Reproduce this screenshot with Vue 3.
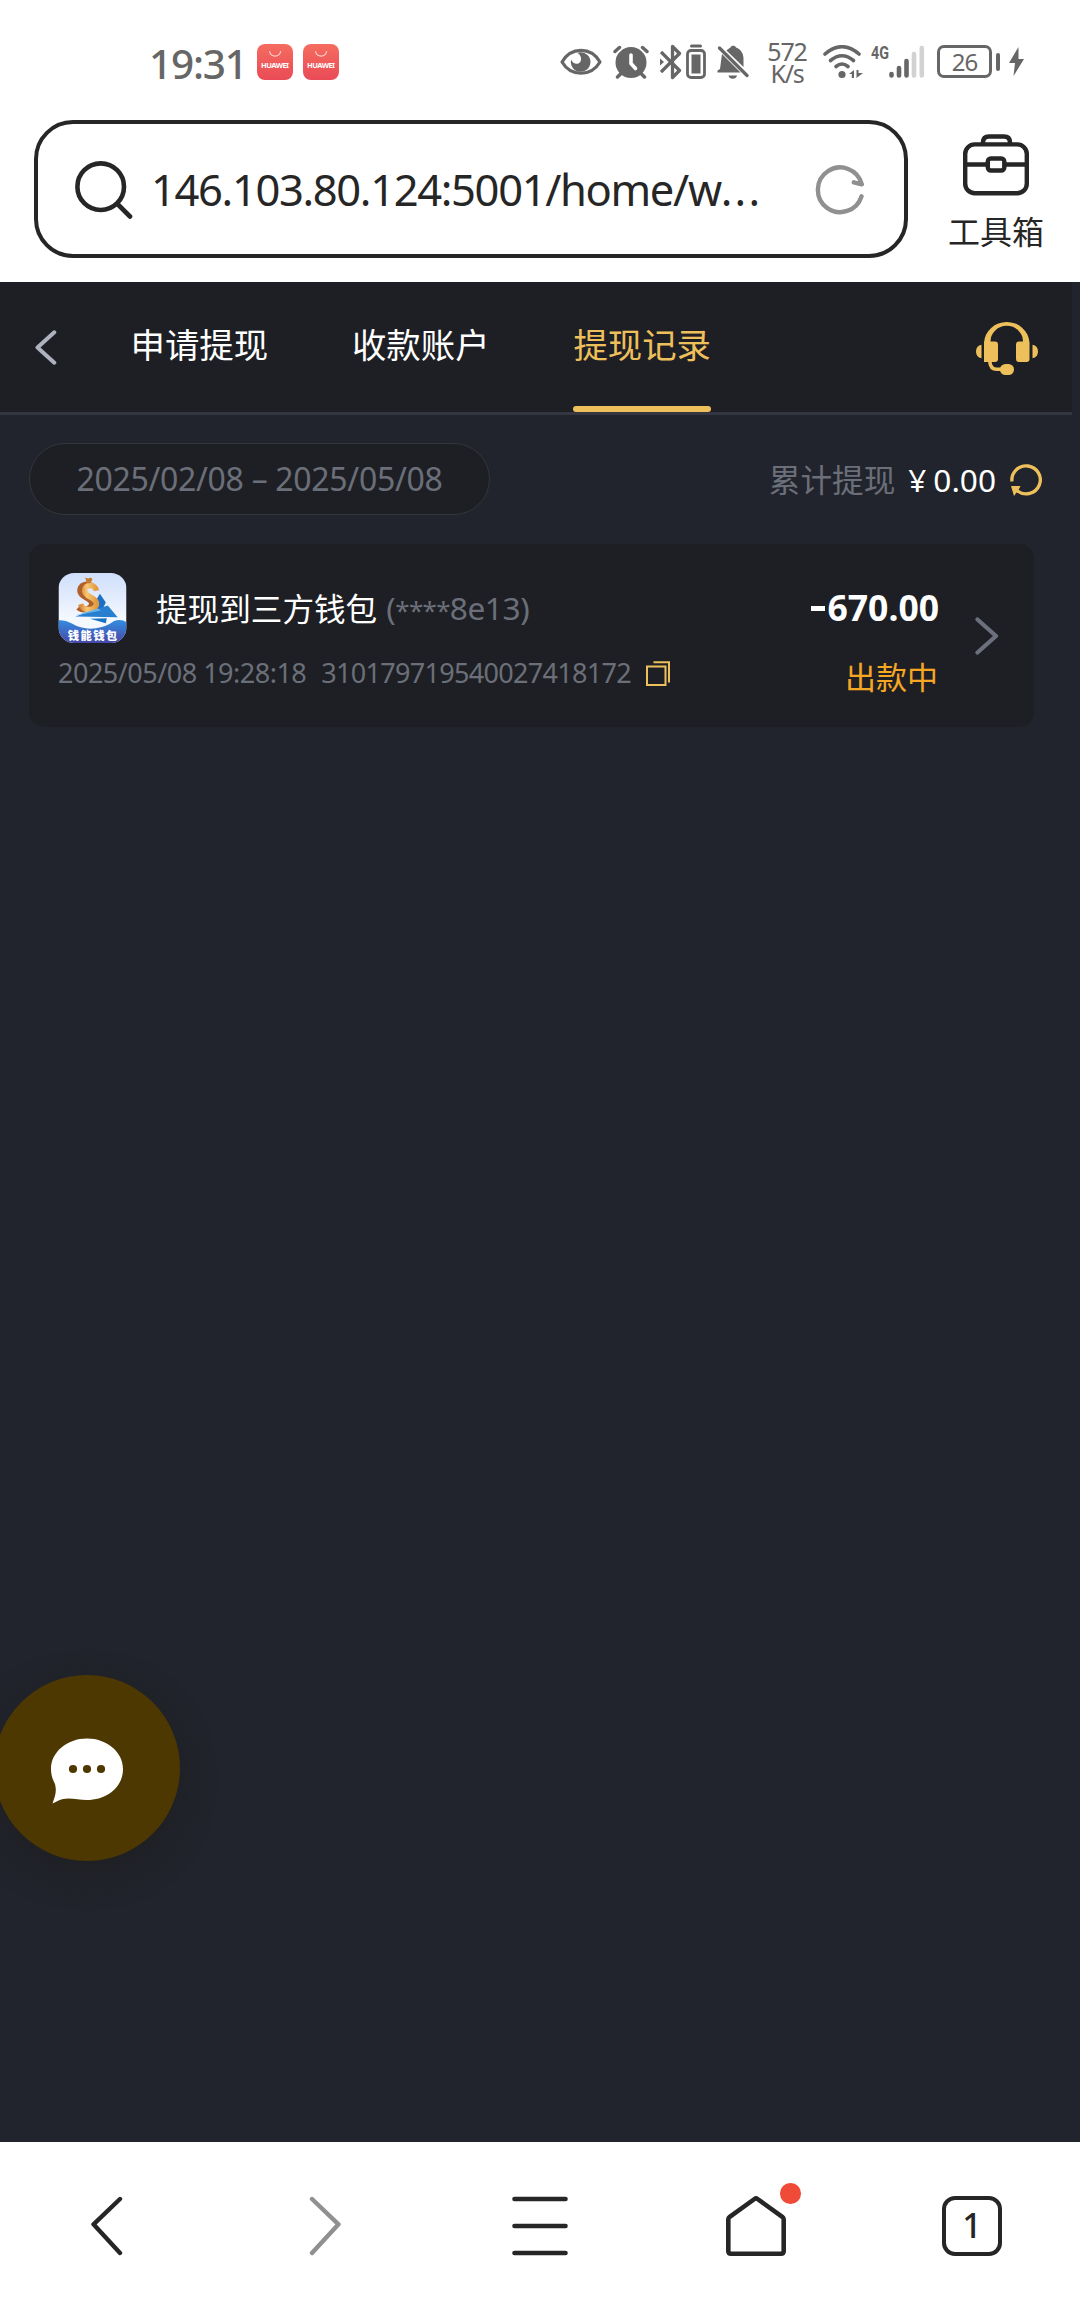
<script setup>
const tabs = ['申请提现', '收款账户', '提现记录']
const activeTab = 2
const record = {
  title: '提现到三方钱包',
  time: '2025/05/08 19:28:18',
  order: '310179719540027418172',
  amount: '670.00',
  status: '出款中',
}
</script>

<template>
  <div class="screen">
    <header class="status">
      <span class="clock">19:31</span>
      <svg v-for="n in 2" :key="n" class="store" width="36" height="36" viewBox="0 0 36 36">
        <defs>
          <linearGradient :id="'store' + n" x1="0" y1="0" x2="0" y2="1">
            <stop offset="0" stop-color="#f56c5f" />
            <stop offset="1" stop-color="#e94b56" />
          </linearGradient>
        </defs>
        <rect width="36" height="36" rx="8" :fill="'url(#store' + n + ')'" />
        <path d="M12.6 7.5a5.6 5.6 0 0 0 11 0" fill="none" stroke="#fbd0cb" stroke-width="1.2" stroke-linecap="round" />
        <text x="18" y="23.5" text-anchor="middle" class="store-name" textLength="28">HUAWEI</text>
      </svg>
      <div class="indicators">
        <svg class="i-eye" width="42" height="28" viewBox="0 0 42 28">
          <path d="M2 14C11-1.500 31-1.500 40 14C31 29 11 29 2 14Z" fill="none" stroke="#666" stroke-width="3.200" stroke-linejoin="round" />
          <path d="M20 4.200A9.800 9.800 0 1 1 11.200 11.500C12.500 16 18.500 17.500 20.500 13.500C21.800 11 21 7 17.500 5Z" fill="#666" />
        </svg>
        <svg class="i-alarm" width="36" height="34" viewBox="0 0 36 34">
          <circle cx="18" cy="17.500" r="15.500" fill="#666" />
          <path d="M2 7l5-4.500M34 7l-5-4.500" stroke="#fff" stroke-width="6" stroke-linecap="round" />
          <path d="M2 6.500l4.500-4M34 6.500l-4.500-4M4.500 32l4-4M31.500 32l-4-4" stroke="#666" stroke-width="3.400" stroke-linecap="round" />
          <path d="M18 10v8.500l4.500 5" fill="none" stroke="#fff" stroke-width="3.600" stroke-linecap="round" stroke-linejoin="round" />
        </svg>
        <svg class="i-bt" width="22" height="36" viewBox="0 0 22 36">
          <path d="M1 8l18.500 18.500L12.500 33.500V2.500L19.500 9.500L1 28" fill="none" stroke="#666" stroke-width="3.300" stroke-linejoin="round" />
          <path d="M0 14.500l4 3.500-4 3.500z" fill="#666" />
        </svg>
        <svg class="i-cell" width="20" height="36" viewBox="0 0 20 36">
          <rect x="1.500" y="6.500" width="17" height="27" rx="3.500" fill="none" stroke="#666" stroke-width="2.800" />
          <path d="M5.500 2h9" stroke="#666" stroke-width="3" stroke-linecap="round" />
          <rect x="5.500" y="10.500" width="9" height="19" fill="#666" />
        </svg>
        <svg class="i-bell" width="32" height="34" viewBox="0 0 32 34">
          <path d="M5 9L23.500 27.500H.5V25.500L3 24Z" fill="#666" />
          <path d="M9.500 5.500C11 4 12.500 3 13.500 2.500C14 .2 18.500.2 19 2.500C24 4.500 26.500 8.500 26.500 13.500V22Z" fill="#666" />
          <path d="M11.500 30.500h8.500a4.400 4.400 0 0 1-8.500 0z" fill="#666" />
          <path d="M2.500 3L30 30.500" stroke="#666" stroke-width="3.200" stroke-linecap="round" />
        </svg>
        <div class="speed">572 K/s</div>
        <svg class="i-wifi" width="40" height="34" viewBox="0 0 40 34">
          <g fill="none" stroke="#666" stroke-width="3.600" stroke-linecap="round">
            <path d="M2 9Q19-5.500 36 9" /><path d="M7.500 15.500Q19 6 30.500 15.500" /><path d="M13 21.500Q19 16.500 25 21.500" />
          </g>
          <circle cx="19" cy="29.500" r="3.600" fill="#666" />
          <path d="M31 25v8h-2.200v-4H26zM33.500 33v-8h2v3H40z" fill="#666" />
        </svg>
        <svg class="i-signal" width="54" height="45" viewBox="0 -10 54 45">
          <text x="0" y="15" class="net" textLength="18" lengthAdjust="spacingAndGlyphs">4G</text>
          <g stroke-width="4.600" stroke-linecap="round">
            <path d="M20.500 30v1.500M28 24v7.500M35.500 17v14.500" stroke="#666" />
            <path d="M43 10v21.500M50.800 4v27.500" stroke="#d2d2d2" />
          </g>
        </svg>
        <div class="battery">26</div>
        <i class="battery-tip"></i>
        <svg class="i-bolt" width="15" height="29" viewBox="0 0 15 29"><path d="M9.500 0L0 16H6L4.500 29L15 12H9.500Z" fill="#666" /></svg>
      </div>
    </header>

    <div class="browser">
      <div class="address">
        <svg class="search" width="58" height="58" viewBox="0 0 58 58" fill="none" stroke="#262626" stroke-width="4.600" stroke-linecap="round">
          <circle cx="25.700" cy="25.700" r="23.300" /><path d="M43 43.500L55 55.500" />
        </svg>
        <span class="url">146.103.80.124:5001/home/w<span class="dots">...</span></span>
        <svg class="reload" width="50" height="50" viewBox="0 0 50 50" fill="none" stroke="#909090" stroke-width="4.400" stroke-linecap="round" stroke-linejoin="round">
          <path d="M46.500 31.300A22.300 22.300 0 1 1 46.800 19.300L38.800 17.300" />
        </svg>
      </div>
      <div class="toolbox">
        <svg width="66" height="62" viewBox="0 0 66 62" fill="none" stroke="#262626" stroke-width="4.400">
          <rect x="2.200" y="10.400" width="61.600" height="48.800" rx="9.500" />
          <path d="M20 9.500V8.500q0-6 6-6h15q6 0 6 6v1M2 30.500h21M43 30.500h21" />
          <rect x="24.800" y="24.500" width="16.500" height="12" rx="3" />
        </svg>
        <span>工具箱</span>
      </div>
    </div>

    <main class="page">
      <nav class="head">
        <svg width="22" height="35" viewBox="0 0 22 35" fill="none" stroke="#adb2be" stroke-width="4" stroke-linecap="round" stroke-linejoin="round"><path d="M19.300 2.300L2.500 17.500L19.300 32.700" /></svg>
        <div class="tabs">
          <div v-for="(t, i) in tabs" :key="t" class="tab" :class="{ active: i === activeTab }">{{ t }}</div>
        </div>
        <svg class="service" width="62" height="55" viewBox="0 0 62 55" fill="#eec05c">
          <path d="M8 42V22.500A22.800 22 0 0 1 53.500 22.500V39Q53.500 42 50.500 42H43Q40 42 40 39V24.500Q40 21.500 43 21.500H47A16.200 15.600 0 0 0 14.500 21.500H19Q22 21.500 22 24.500V39Q22 42 19 42Z" />
          <path d="M5.500 24.800v13.500Q0 37 0 31.500T5.500 24.800zM56.500 24.800v13.500Q62 37 62 31.500T56.500 24.800z" />
          <path d="M13.800 41Q14 49.300 21 49.300H28" fill="none" stroke="#eec05c" stroke-width="3.600" />
          <rect x="24" y="44" width="14" height="11" rx="5.500" />
        </svg>
      </nav>

      <section class="filter">
        <div class="range">2025/02/08 – 2025/05/08</div>
        <div class="total">
          <span class="total-label">累计提现</span>
          <span class="yen">¥</span><span class="total-value">0.00</span>
          <svg width="32" height="32" viewBox="0 0 32 32">
            <path d="M2 17.500A14.200 14 0 1 1 7.500 27" fill="none" stroke="#eec05c" stroke-width="3.300" />
            <path d="M1 22H10.500L8.500 26L10 28.500L6.500 28.500L4 32Z" fill="#eec05c" />
          </svg>
        </div>
      </section>

      <article class="card">
        <div class="info">
          <div class="title-row">
            <svg class="wallet" width="69" height="71" viewBox="0 0 69 71">
              <defs>
                <linearGradient id="wallet-sky" x1="0" y1="0" x2="0" y2="1"><stop offset="0" stop-color="#cfdefb" /><stop offset=".65" stop-color="#f4f8ff" /></linearGradient>
                <linearGradient id="wallet-sea" x1="0" y1="0" x2="0" y2="1"><stop offset="0" stop-color="#338de0" /><stop offset="1" stop-color="#4748a8" /></linearGradient>
                <linearGradient id="wallet-gold" x1="0" y1="0" x2="1" y2="0"><stop offset="0" stop-color="#d98a3c" /><stop offset=".4" stop-color="#f8c874" /><stop offset="1" stop-color="#e29a3e" /></linearGradient>
                <clipPath id="wallet-clip"><rect width="69" height="71" rx="16" /></clipPath>
              </defs>
              <g clip-path="url(#wallet-clip)">
                <rect width="69" height="71" fill="url(#wallet-sky)" />
                <path d="M42 21L48 30L45 36L32 38Z" fill="#1c6fc4" />
                <path d="M34 13C29 10 22 12 22 18C22 25 34 25 34 31C34 37 25 39 20 35" fill="none" stroke="#b0602a" stroke-width="6" />
                <path d="M38.500 18C37 10.500 26.500 11 26.500 18C26.500 24.500 38.500 24.500 38.500 31C38.500 38.500 25 39.500 22.500 31.500" fill="none" stroke="url(#wallet-gold)" stroke-width="5.600" />
                <path d="M27 4.500l3 1 3-1 1.500 2-2.500 4h-3z" fill="#c57a2f" />
                <path d="M50 33L60 45L17 44Z" fill="#287fd0" />
                <path d="M17 43L40 36L43 38Z" fill="#69b5ee" />
                <path d="M32 46.500L49 46L48 51Z" fill="#1873c5" />
                <path d="M0 48Q6 47 13 51Q25 58 38 56Q48 55 56 49Q63 46 69 50V71H0Z" fill="url(#wallet-sea)" />
                <text x="34.500" y="67.500" text-anchor="middle" class="wallet-name" textLength="50">钱能钱包</text>
              </g>
            </svg>
            <span class="title">{{ record.title }}</span>
            <span class="account">(<span class="mask">****</span>8e13)</span>
          </div>
          <div class="meta">
            <span class="time">{{ record.time }}</span>
            <span class="order">{{ record.order }}</span>
            <svg width="25" height="25" viewBox="0 0 25 25" fill="none" stroke="#eec05c" stroke-width="2"><rect x="1" y="5.500" width="18.500" height="18.500" /><path d="M7.500 1.200h15.500V21.500" /></svg>
          </div>
        </div>
        <div class="result">
          <span class="amount"><i></i>{{ record.amount }}</span>
          <span class="state">{{ record.status }}</span>
        </div>
        <svg class="more" width="24" height="38" viewBox="0 0 24 38" fill="none" stroke="#6b707c" stroke-width="4.200" stroke-linecap="round" stroke-linejoin="round"><path d="M2.500 2.500L21 19L2.500 35.500" /></svg>
      </article>

      <div class="chat">
        <svg width="74" height="67" viewBox="0 0 74 67">
          <path d="M37 .5C57 .5 73 14 73 31C73 49 57 62 37 62C30 62 25 60.500 18 60.500C11 60.500 7 63.500 2.500 65.500C5 58 7 54 5 46C2.500 41 1 37 1 31C1 14 17 .5 37 .5Z" fill="#fff" />
          <g fill="#4d3802"><circle cx="23" cy="31" r="4.100" /><circle cx="37" cy="31" r="4.100" /><circle cx="51" cy="31" r="4.100" /></g>
        </svg>
      </div>
    </main>

    <footer class="bottom">
      <div class="slot"><svg class="nav-back" width="32" height="60" viewBox="0 0 32 60" fill="none" stroke="#262626" stroke-width="4.400" stroke-linecap="round" stroke-linejoin="round"><path d="M29 3L2.500 28.300L29 57" /></svg></div>
      <div class="slot"><svg class="nav-fwd" width="32" height="60" viewBox="0 0 32 60" fill="none" stroke="#909090" stroke-width="4.400" stroke-linecap="round" stroke-linejoin="round"><path d="M3 3L29.500 28.300L3 57" /></svg></div>
      <div class="slot"><svg width="56" height="60" viewBox="0 0 56 60" stroke="#262626" stroke-width="4.600" stroke-linecap="round"><path d="M2.500 3h51M2.500 30h51M2.500 57h51" /></svg></div>
      <div class="slot">
        <div class="home">
          <svg width="60" height="60" viewBox="0 0 60 60" fill="none" stroke="#262626" stroke-width="4.600" stroke-linejoin="round"><path d="M28.500 3Q30 1.900 31.500 3L56.300 20.800Q57.700 21.900 57.700 23.500V55Q57.700 57.700 55 57.700H5Q2.300 57.700 2.300 55V23.500Q2.300 21.900 3.700 20.800Z" /></svg>
          <i class="dot"></i>
        </div>
      </div>
      <div class="slot"><div class="count">1</div></div>
    </footer>
  </div>
</template>

<style>
body {
  margin: 0;
}
</style>

<style scoped>
.screen {
  width: 1080px;
  height: 2310px;
  overflow: hidden;
  display: flex;
  flex-direction: column;
  background: #fff;
  color: #262626;
  font-family: "Noto Sans", "Noto Sans CJK SC", sans-serif;
}
svg {
  display: block;
  flex: none;
}
span {
  white-space: nowrap;
}
.status {
  height: 120px;
  padding: 3px 56px 0 149px;
  box-sizing: border-box;
  display: flex;
  align-items: center;
  color: #666;
}
.clock {
  width: 108px;
  padding-top: 4px;
  font-size: 40.500px;
  line-height: 44px;
  letter-spacing: -1.200px;
  font-weight: 500;
}
.store {
  margin-right: 9.500px;
}
.store-name {
  font: 700 7.500px "Noto Sans", sans-serif;
  fill: #fff;
}
.indicators {
  margin-left: auto;
  display: flex;
  align-items: center;
}
.i-alarm { margin-left: 11px; }
.i-bt { margin-left: 11px; }
.i-cell { margin-left: 4px; }
.i-bell { margin-left: 11px; }
.speed {
  width: 44px;
  margin-left: 16px;
  padding-top: 1px;
  text-align: center;
  font-size: 25px;
  line-height: 22.500px;
  letter-spacing: -1.200px;
}
.i-wifi { margin-left: 14px; }
.i-signal { margin: -10px 0 0 8px; }
.net {
  font: 700 18px Roboto, sans-serif;
  fill: #666;
}
.battery {
  width: 49px;
  height: 27px;
  margin-left: 12px;
  border: 3px solid #666;
  border-radius: 7px;
  font-size: 24px;
  line-height: 27px;
  text-align: center;
  letter-spacing: -1px;
}
.battery-tip {
  width: 4px;
  height: 18px;
  margin-left: 4px;
  border-radius: 2px;
  background: #666;
}
.i-bolt { margin-left: 9px; }

.browser {
  height: 162px;
  padding-left: 34px;
  display: flex;
  align-items: flex-start;
}
.address {
  width: 874px;
  height: 137.500px;
  box-sizing: border-box;
  border: 4.500px solid #262626;
  border-radius: 39px;
  padding: 0 39px 0 37px;
  display: flex;
  align-items: center;
}
.search { margin-top: 3px; }
.url {
  margin-left: 18px;
  font-size: 43.500px;
  line-height: 60px;
  letter-spacing: -1.350px;
}
.dots {
  letter-spacing: 2.200px;
}
.reload {
  margin-left: auto;
  margin-top: 2px;
}
.toolbox {
  flex: 1;
  padding: 14px 0 0 4px;
  display: flex;
  flex-direction: column;
  align-items: center;
}
.toolbox span {
  margin-top: 13px;
  font-size: 32px;
  line-height: 46px;
}

.page {
  height: 1860px;
  position: relative;
  background: #21242c;
}
.head {
  width: 1072px;
  height: 133px;
  box-sizing: border-box;
  border-bottom: 3px solid #333640;
  padding: 0 34px 0 35px;
  display: flex;
  align-items: center;
  background: #1e1f24;
}
.tabs {
  align-self: stretch;
  margin-left: 73.500px;
  display: flex;
  gap: 83.900px;
}
.tab {
  position: relative;
  font-size: 34.400px;
  line-height: 125px;
  color: #fff;
}
.tab.active {
  color: #eec05c;
}
.tab.active::after {
  content: "";
  position: absolute;
  left: 0;
  right: 0;
  bottom: 0;
  height: 6px;
  border-radius: 3px;
  background: #eec05c;
}
.service { margin-left: auto; }

.filter {
  padding: 28px 38px 0 29px;
  display: flex;
  align-items: center;
  justify-content: space-between;
}
.range {
  width: 461px;
  height: 72px;
  box-sizing: border-box;
  border: 1px solid #34363b;
  border-radius: 36px;
  background: #1e1f24;
  color: #6b6f79;
  font-size: 32px;
  line-height: 70px;
  text-align: center;
  letter-spacing: -0.300px;
}
.total {
  padding-top: 1px;
  display: flex;
  align-items: center;
  font-size: 31.600px;
  line-height: 44px;
  color: #fff;
}
.total-label {
  color: #6b6f79;
}
.yen { margin-left: 13px; }
.total-value { margin-left: 7px; }
.total svg { margin-left: 14px; }

.card {
  width: 1005px;
  height: 183px;
  margin: 28.500px 0 0 29px;
  padding: 29px 35px 0 29px;
  box-sizing: border-box;
  border-radius: 15px;
  background: #1e1f24;
  display: flex;
}
.title-row {
  display: flex;
  align-items: center;
}
.wallet {
  height: 70px;
}
.wallet-name {
  font: 900 11.500px "Noto Sans CJK SC", sans-serif;
  fill: #fff;
}
.title {
  margin: 2px 0 0 29px;
  font-size: 31.600px;
  color: #fff;
  line-height: 44px;
}
.account {
  margin: 2px 0 0 9px;
  font-size: 31.600px;
  color: #6b6f79;
  line-height: 44px;
  letter-spacing: -0.400px;
}
.mask {
  font-size: 26px;
  letter-spacing: -0.700px;
}
.meta {
  margin-top: 12px;
  display: flex;
  align-items: center;
  font-size: 27px;
  line-height: 36px;
  color: #6b6f79;
  letter-spacing: -0.700px;
}
.time { letter-spacing: -0.500px; }
.order { margin-left: 15px; }
.meta svg { margin: 2px 0 0 15px; }
.result {
  margin-left: auto;
  display: flex;
  flex-direction: column;
  align-items: flex-end;
}
.amount {
  margin-top: 11px;
  display: flex;
  align-items: center;
  font-size: 35.500px;
  font-weight: 700;
  line-height: 46px;
  color: #fff;
}
.amount i {
  width: 14px;
  height: 4.500px;
  margin: 4px 2px 0 0;
  background: #fff;
}
.state {
  margin: 25px 1px 0 0;
  font-size: 31px;
  line-height: 44px;
  color: #f5a623;
}
.more {
  margin: 44px 0 0 36px;
}
.chat {
  position: absolute;
  left: -6px;
  top: 1393px;
  width: 186px;
  height: 186px;
  padding-top: 6px;
  box-sizing: border-box;
  border-radius: 50%;
  background: #4d3802;
  box-shadow: 0 12px 32px rgba(30, 28, 28, 0.600);
  display: flex;
  align-items: center;
  justify-content: center;
}

.bottom {
  flex: 1;
  display: flex;
  background: #fff;
}
.slot {
  flex: 1;
  display: flex;
  justify-content: center;
  padding-top: 54px;
}
.nav-back { margin-right: 3px; }
.nav-fwd { margin-left: 2px; }
.home {
  position: relative;
  width: 60px;
  height: 60px;
}
.dot {
  position: absolute;
  left: 54px;
  top: -13px;
  width: 20.500px;
  height: 20.500px;
  border-radius: 50%;
  background: #f04a38;
}
.count {
  width: 60px;
  height: 60px;
  box-sizing: border-box;
  border: 4px solid #262626;
  border-radius: 13px;
  font-size: 34px;
  font-weight: 500;
  line-height: 51px;
  text-align: center;
}
</style>
